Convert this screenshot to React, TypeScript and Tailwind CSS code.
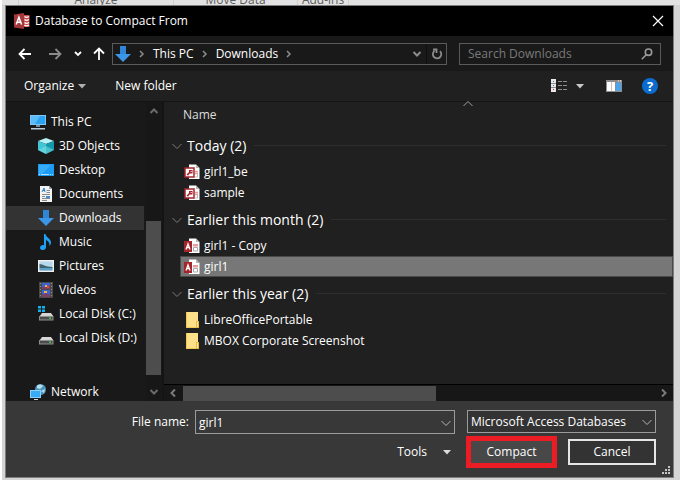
import React, { useState } from 'react';

type IconProps = { className?: string };

const AccessLogo = () => (
  <svg width="16" height="16" viewBox="0 0 16 16" className="shrink-0">
    <path d="M9 2h6.500v12H9z" fill="#c9484c" />
    <path d="M10.500 3.500c1 1 3 1 4.500 0M10.500 6.500c1 1 3 1 4.500 0M10.500 9.500c1 1 3 1 4.500 0M10.500 12c1 1 3 1 4.500 0" stroke="#fff" strokeWidth="1.400" fill="none" />
    <path d="M0 1.500 10 0v16L0 14.500z" fill="#a4373a" />
    <path d="M2.200 11.500 4.900 4.200l2.700 7.300M3.300 9.200h3.200" stroke="#fff" strokeWidth="1.500" fill="none" />
  </svg>
);

const DownloadIcon = ({ className }: IconProps) => (
  <svg width="16" height="16" viewBox="0 0 16 16" className={className}>
    <path d="M5 0h6v8h5l-8 8-8-8h5z" fill="#3c96e8" />
    <path d="M5 0h6v8H5z" fill="#2f86d6" />
  </svg>
);

const PcIcon = () => (
  <svg width="16" height="16" viewBox="0 0 16 16">
    <rect x="0" y="1" width="16" height="10" fill="#7fc4f5" />
    <rect x="1" y="2" width="14" height="8" fill="#2ba3f3" />
    <path d="M1 2h9L5 10H1z" fill="#5cbcf8" />
    <path d="M6 11h4v2H6z" fill="#6f8ea3" />
    <path d="M1 14h14v1.500H1z" fill="#b9cbd8" />
  </svg>
);

const CubeIcon = () => (
  <svg width="16" height="16" viewBox="0 0 16 16">
    <path d="M8 0l8 3-8 3-8-3z" fill="#b7f1f5" />
    <path d="M0 3l8 3v10l-8-4z" fill="#42c6d3" />
    <path d="M16 3L8 6v10l8-4z" fill="#159aad" />
    <path d="M0 12l8-4 8 4-8 4z" fill="#7de3ea" opacity=".5" />
  </svg>
);

const DesktopIcon = () => (
  <svg width="16" height="16" viewBox="0 0 16 16">
    <rect x="0" y="2" width="16" height="12" fill="#1a9cf4" />
    <path d="M1 3h12L4 12H1z" fill="#36acf8" />
    <path d="M1 12.500h14" stroke="#b5e0ff" strokeWidth="1" strokeDasharray="1 1 8 1" />
  </svg>
);

const DocumentIcon = () => (
  <svg width="16" height="16" viewBox="0 0 16 16">
    <path d="M2 0h9l3 3v13H2z" fill="#f3f3f3" />
    <path d="M11 0v3h3z" fill="#a7a7a7" />
    <path d="M4 6l2-4 1 4M5 4.500h2" stroke="#2d7fca" fill="none" />
    <path d="M8.500 4.500H12M8.500 6.500H12M4 8.500h8M4 10.500h3M4 12.500h8M4 14.500h5" stroke="#8b8b8b" />
    <path d="M8 10h4v2H8z" fill="#3f8fd4" />
  </svg>
);

const MusicIcon = () => (
  <svg width="16" height="16" viewBox="0 0 16 16">
    <path d="M6 0h1.500c0 3 5.500 4.500 5.500 8.500 0 1.500-.8 2.600-1.600 3.500.6-3-1-5-3.400-6v7c0 1.800-1.300 3-3 3s-3-.9-3-2.300S3.300 11 5 11c.4 0 .7.100 1 .200z" fill="#1ea0f5" />
  </svg>
);

const PictureIcon = () => (
  <svg width="16" height="16" viewBox="0 0 16 16">
    <rect x="0" y="2" width="16" height="12" fill="#efefef" />
    <rect x="1.500" y="3.500" width="13" height="9" fill="#b6d8ec" />
    <path d="M1.500 6c4 0 5 3 13 3v1h-13z" fill="#3f6470" />
    <path d="M1.500 10h13v2.500h-13z" fill="#5d9fc9" />
  </svg>
);

const VideoIcon = () => (
  <svg width="16" height="16" viewBox="0 0 16 16">
    <path d="M1 0h14v16H1z" fill="#4a4a4a" />
    <path d="M4 1h8v6H4zM4 8h8v7H4z" fill="#3c62d4" />
    <path d="M4 5h4l4-2v4H4zM4 13l4-2 4 2v2H4z" fill="#7d3f63" />
    <path d="M7 3h2v2H7zM6 9h3v2H6z" fill="#f0b43a" />
    <path d="M9 4h2v2H9z" fill="#e2453c" />
    <path d="M2.500 1v15M13.500 1v15" stroke="#8f8f8f" strokeDasharray="1 2" />
  </svg>
);

const DiskIcon = ({ windows }: { windows?: boolean }) => (
  <svg width="16" height="16" viewBox="0 0 16 16">
    <path d="M4 7h9l2.500 3.500h-14z" fill="#d6d6d6" />
    <path d="M1 10h14.500v4.500H1z" fill="#8f8f8f" />
    <path d="M2 11h12.500v2.500H2z" fill="#4c4c4c" />
    <path d="M11 11.500h2v1.200h-2z" fill="#35e04f" />
    {windows && <path d="M0 0h3v2.500H0zM4 0h3v2.500H4zM0 3.500h3V6H0zM4 3.500h3V6H4z" fill="#12b1f0" />}
  </svg>
);

const NetworkIcon = () => (
  <svg width="16" height="16" viewBox="0 0 16 16">
    <circle cx="10.500" cy="5.500" r="5.500" fill="#4b94bb" />
    <path d="M7 1.500c2-1.500 5-1 6 .5l-3 3-3-1zM11 7l4-2-1 4z" fill="#b4dded" />
    <rect x="0" y="6" width="11" height="8" fill="#8ad0fb" />
    <rect x="1" y="7" width="9" height="6" fill="#39aaf5" />
    <path d="M4 15h4v1H4z" fill="#cfdbe3" />
  </svg>
);

const AccdeIcon = () => (
  <svg width="16" height="16" viewBox="0 0 16 16">
    <path d="M5 .5h7L15.500 4v11H5z" fill="#fff" />
    <path d="M12 .5V4h3.500z" fill="#b5b5b5" />
    <path d="M11 7.500h3M11 9.500h2" stroke="#ec9a9c" fill="none" strokeWidth="1.400" />
    <path d="M13.500 8.500v4.500H11" stroke="#bdbdbd" fill="none" />
    <rect x="1" y="4" width="9" height="9" fill="#fff" stroke="#a4262c" strokeWidth="1.500" />
    <path d="M3 11l2.500-2.500M4 10l1 1" stroke="#a4262c" strokeWidth="1.200" />
    <path d="M5 6h3.500v3.500H5z" fill="#a4262c" />
    <path d="M6.700 7h1v1h-1z" fill="#fff" />
  </svg>
);

const AccdbIcon = () => (
  <svg width="16" height="16" viewBox="0 0 16 16">
    <path d="M5 .5h7L15.500 4v11H5z" fill="#fff" />
    <path d="M12 .5V4h3.500z" fill="#b5b5b5" />
    <path d="M9 6h5v2.500H9z" fill="#ec9a9c" />
    <path d="M9.500 9.500h4v3.500h-4z" fill="#fff" stroke="#a9a9a9" />
    <path d="M0 3h8v11H0z" fill="#a4262c" />
    <path d="M2 11.500 4 6l2 5.500M3 9.700h2" stroke="#fff" strokeWidth="1.300" fill="none" />
  </svg>
);

const FolderIcon = () => (
  <svg width="16" height="16" viewBox="0 0 16 16">
    <path d="M2 0h12v16H2z" fill="#ffe08a" />
    <path d="M2 0h1v16H2zM3 15h9v1H3z" fill="#f2c94e" />
    <path d="M12 9h3v7h-3z" fill="#e9b93a" />
    <path d="M13 10h1v5h-1z" fill="#ffe9a8" />
  </svg>
);

const Chevron = ({ className }: IconProps) => (
  <svg width="10" height="10" viewBox="0 0 10 10" fill="none" stroke="currentColor" className={className}>
    <path d="M.5 3 5 7.500 9.500 3" />
  </svg>
);

const BoldChevron = ({ className }: IconProps) => (
  <svg width="10" height="10" viewBox="0 0 10 10" fill="none" stroke="currentColor" strokeWidth="2" className={className}>
    <path d="M1.500 3 5 6.500 8.500 3" />
  </svg>
);

const Crumb = () => (
  <svg width="6" height="8" viewBox="0 0 6 8" fill="none" stroke="#8c8c8c" strokeWidth="1.500" className="shrink-0">
    <path d="M1 1l3 3-3 3" />
  </svg>
);

const Caret = ({ className }: IconProps) => (
  <svg width="8" height="5" viewBox="0 0 8 5" className={className}>
    <path d="M0 0h8L4 4.500z" fill="currentColor" />
  </svg>
);

const Arrow = ({ className }: IconProps) => (
  <svg width="14" height="14" viewBox="0 0 14 14" fill="none" stroke="currentColor" strokeWidth="1.800" className={className}>
    <path d="M13 7H2M6.500 2l-5 5 5 5" />
  </svg>
);

const places = [
  { name: '3D Objects', icon: <CubeIcon /> },
  { name: 'Desktop', icon: <DesktopIcon /> },
  { name: 'Documents', icon: <DocumentIcon /> },
  { name: 'Downloads', icon: <DownloadIcon /> },
  { name: 'Music', icon: <MusicIcon /> },
  { name: 'Pictures', icon: <PictureIcon /> },
  { name: 'Videos', icon: <VideoIcon /> },
  { name: 'Local Disk (C:)', icon: <DiskIcon windows /> },
  { name: 'Local Disk (D:)', icon: <DiskIcon /> },
];

const groups = [
  {
    title: 'Today (2)',
    files: [
      { name: 'girl1_be', icon: <AccdeIcon /> },
      { name: 'sample', icon: <AccdeIcon /> },
    ],
  },
  {
    title: 'Earlier this month (2)',
    files: [
      { name: 'girl1 - Copy', icon: <AccdbIcon /> },
      { name: 'girl1', icon: <AccdbIcon /> },
    ],
  },
  {
    title: 'Earlier this year (2)',
    files: [
      { name: 'LibreOfficePortable', icon: <FolderIcon /> },
      { name: 'MBOX Corporate Screenshot', icon: <FolderIcon /> },
    ],
  },
];

// Bottom edge of the Access ribbon that shows above the dialog
const Ribbon = () => (
  <div className="ml-[2px] flex h-[5px] items-end overflow-hidden bg-[#e2e2e2] pl-4 text-xs leading-[10px] text-[#5c5c5c]">
    <div className="flex w-[156px] justify-center border-x border-[#cfcfcf]">Analyze</div>
    <div className="flex w-[124px] justify-center border-r border-[#cfcfcf]">Move Data</div>
    <div className="flex w-[51px] justify-center whitespace-nowrap border-r border-[#cfcfcf]">Add-ins</div>
  </div>
);

const TitleBar = () => (
  <header className="flex h-[30px] items-center bg-black pl-2 pr-2 text-white">
    <AccessLogo />
    <h1 className="ml-[5px] flex-1">Database to Compact From</h1>
    <button aria-label="Close" className="p-px">
      <svg width="12" height="12" viewBox="0 0 12 12" stroke="#fff" strokeWidth="1.200">
        <path d="M1 1l10 10M11 1L1 11" />
      </svg>
    </button>
  </header>
);

const NavBar = () => (
  <nav className="flex h-[35px] items-center bg-[#191919] pl-3 pr-3 text-white">
    <button aria-label="Back"><Arrow /></button>
    <button aria-label="Forward" className="ml-4 text-[#8a8a8a]"><Arrow className="rotate-180" /></button>
    <button aria-label="Recent locations" className="ml-3">
      <svg width="8" height="8" viewBox="0 0 8 8" fill="none" stroke="currentColor" strokeWidth="1.800">
        <path d="M1 2l3 3 3-3" />
      </svg>
    </button>
    <button aria-label="Up" className="ml-[10px]"><Arrow className="rotate-90" /></button>
    <div className="ml-[6px] flex h-[22px] min-w-0 flex-1 items-center border border-[#5a5a5a] pl-[2px]">
      <DownloadIcon className="mr-2 shrink-0" />
      <Crumb />
      <a href="#this-pc" className="ml-2 mr-2 whitespace-nowrap">This PC</a>
      <Crumb />
      <a href="#downloads" className="ml-2 mr-2 whitespace-nowrap">Downloads</a>
      <Crumb />
      <button aria-label="Previous locations" className="ml-auto mr-1 text-[#8c8c8c]"><BoldChevron /></button>
      <button aria-label="Refresh" className="flex h-full w-5 items-center justify-center border-l border-[#101010] text-[#8c8c8c]">
        <svg width="12" height="12" viewBox="0 0 12 12" fill="none" stroke="currentColor" strokeWidth="1.800">
          <path d="M9 3.200a4.200 4.200 0 1 1-5.500-.3M2 1.500h3.500V5" />
        </svg>
      </button>
    </div>
    <div className="relative ml-3 w-[202px]">
      <input
        type="search"
        aria-label="Search Downloads"
        placeholder="Search Downloads"
        className="h-[22px] w-full border border-[#5a5a5a] bg-transparent pl-2 pr-6 text-white outline-none placeholder:text-[#7a7a7a]"
      />
      <svg width="12" height="12" viewBox="0 0 12 12" fill="none" stroke="#9a9a9a" strokeWidth="1.600" className="absolute right-2 top-[5px]">
        <circle cx="7.500" cy="4.200" r="3.200" />
        <path d="M5.200 6.700.8 11.200" />
      </svg>
    </div>
  </nav>
);

const Toolbar = () => (
  <div className="flex h-[31px] items-center border-b border-[#141414] bg-[#202020] pl-[18px] pr-[15px] text-white">
    <button className="flex items-center gap-1">
      Organize <Caret className="text-[#b0b0b0]" />
    </button>
    <button className="ml-[29px]">New folder</button>
    <button aria-label="Change view" className="ml-auto flex items-center gap-2">
      <svg width="17" height="14" viewBox="0 0 17 14">
        <path d="M0 0h5v13H0z" fill="#e9e9e9" />
        <path d="M0 4.500h5M0 8.500h5" stroke="#8c8c8c" />
        <path d="M2 2h1v1H2z" fill="#3f7fbf" />
        <path d="M2 6h1v1H2z" fill="#3f7fbf" />
        <path d="M2 10h1v1H2z" fill="#c0392b" />
        <path d="M7 2.500h4M12 2.500h4M7 6.500h4M12 6.500h4M7 10.500h4M12 10.500h4" stroke="#8c8c8c" />
      </svg>
      <Caret className="text-[#c8c8c8]" />
    </button>
    <button aria-label="Show the preview pane" className="ml-[22px]">
      <svg width="16" height="12" viewBox="0 0 16 12">
        <path d="M0 0h16v12H0z" fill="#8d8d8d" />
        <path d="M1 2h4v9H1zM5.500 2H9v9H5.500z" fill="#fff" />
        <path d="M10 3h5v8h-5z" fill="#4ba5ee" />
        <path d="M12 1h1M14 1h1" stroke="#fff" />
      </svg>
    </button>
    <button aria-label="Help" className="ml-5 h-4 w-4 rounded-full bg-[#0b6bce] text-[13px] font-bold leading-4">?</button>
  </div>
);

const Sidebar = () => (
  <aside className="flex w-[156px] shrink-0 bg-[#191919] text-white">
    <ul className="flex w-[138px] flex-col pt-2">
      <li>
        <a href="#this-pc" className="flex h-6 items-center gap-[5px] pl-6"><PcIcon />This PC</a>
      </li>
      {places.map((place) => (
        <li key={place.name}>
          <a
            href={`#${place.name}`}
            className={`flex h-6 items-center gap-[5px] whitespace-nowrap pl-8 ${place.name === 'Downloads' ? 'bg-[#333]' : ''}`}
          >
            {place.icon}
            {place.name}
          </a>
        </li>
      ))}
      <li className="mt-8">
        <a href="#network" className="flex h-[19px] items-center gap-[5px] pl-6"><NetworkIcon />Network</a>
      </li>
    </ul>
    <div className="ml-[2px] flex w-[15px] flex-col items-center bg-[#171717] py-1 text-[#6a6a6a]">
      <BoldChevron className="rotate-180" />
      <div className="mb-3 mt-[105px] w-full flex-1 bg-[#4d4d4d]" />
      <BoldChevron />
    </div>
  </aside>
);

type FileListProps = { selected: string; onSelect: (name: string) => void };

const FileList = ({ selected, onSelect }: FileListProps) => (
  <main className="flex min-w-0 flex-1 flex-col border-l-2 border-[#141414] bg-[#202020]">
    <div className="relative flex h-[26px] items-center pl-[19px] text-[#dedede]">
      Name
      <Chevron className="absolute left-[299px] top-[-3px] rotate-180 text-[#a0a0a0]" />
    </div>
    <div className="flex-1 pt-1">
      {groups.map((group) => (
        <section key={group.title} className="mb-[3px]">
          <h2 className="mb-[2px] flex h-[27px] items-center pl-2 pr-[7px] text-sm text-white">
            <Chevron className="mr-[5px] text-[#7a7a7a]" />
            {group.title}
            <span className="ml-2 h-px flex-1 bg-[#2e2e2e]" />
          </h2>
          <ul className="pl-4">
            {group.files.map((file) => (
              <li key={file.name}>
                <button
                  onClick={() => onSelect(file.name)}
                  className={`flex h-[21px] w-full items-center gap-1 border pl-[3px] text-white ${selected === file.name ? 'border-[#4a4a4a] bg-[#777]' : 'border-transparent'}`}
                >
                  {file.icon}
                  {file.name}
                </button>
              </li>
            ))}
          </ul>
        </section>
      ))}
    </div>
    <div className="flex h-[17px] items-center border-t border-black bg-[#171717] px-1 text-[#7a7a7a]">
      <BoldChevron className="rotate-90" />
      <div className="ml-[5px] h-[15px] w-[253px] bg-[#4d4d4d]" />
      <BoldChevron className="ml-auto -rotate-90" />
    </div>
  </main>
);

type FooterProps = { fileName: string; onChange: (name: string) => void };

const Footer = ({ fileName, onChange }: FooterProps) => (
  <footer className="relative flex flex-col bg-[#383838] pb-[9px] pr-[17px] pt-[9px] text-white">
    <div className="flex h-6 items-start gap-3">
      <div className="flex flex-1 items-center gap-[6px]">
        <label htmlFor="file-name" className="ml-auto">File name:</label>
        <div className="relative w-[260px]">
          <input
            id="file-name"
            value={fileName}
            onChange={(e) => onChange(e.target.value)}
            className="h-6 w-full border border-[#9b9b9b] bg-transparent pl-[3px] pr-6 outline-none"
          />
          <Chevron className="pointer-events-none absolute right-1 top-2 text-[#b5b5b5]" />
        </div>
      </div>
      <div className="relative w-[189px]">
        <select
          aria-label="File type"
          className="h-[23px] w-full appearance-none border border-[#9b9b9b] bg-[#333] pl-[3px] pr-5 outline-none"
        >
          <option>Microsoft Access Databases</option>
        </select>
        <Chevron className="pointer-events-none absolute right-1 top-[7px] text-[#b5b5b5]" />
      </div>
    </div>
    <div className="mt-[2px] flex items-center justify-end">
      <button className="flex items-center gap-4">
        Tools <Caret className="text-[#dcdcdc]" />
      </button>
      <button className="ml-[15px] h-8 w-[91px] border-[5px] border-[#ec1c24] bg-[#484848]">Compact</button>
      <button className="ml-[11px] h-[26px] w-[88px] border-2 border-[#e6e6e6] bg-[#333]">Cancel</button>
    </div>
    <svg width="9" height="9" viewBox="0 0 9 9" fill="#c4c4c4" className="absolute bottom-[2px] right-[2px]">
      <path d="M6 0h2v2H6zM3 3h2v2H3zM6 3h2v2H6zM0 6h2v2H0zM3 6h2v2H3zM6 6h2v2H6z" />
    </svg>
  </footer>
);

const App: React.FC = () => {
  const [fileName, setFileName] = useState('girl1');

  return (
    <div className="flex min-h-screen flex-col bg-white font-['Open_Sans','Noto_Sans',sans-serif] text-xs leading-4">
      <Ribbon />
      <div className="mb-[3px] ml-[2px] flex flex-1 flex-col bg-[#d4d4d4] pb-[2px] pl-[3px] pr-[6px]">
        <div className="flex flex-1 flex-col border border-[#7d7d7d]">
          <TitleBar />
          <NavBar />
          <Toolbar />
          <div className="flex flex-1">
            <Sidebar />
            <FileList selected={fileName} onSelect={setFileName} />
          </div>
          <Footer fileName={fileName} onChange={setFileName} />
        </div>
      </div>
    </div>
  );
};

export default App;
